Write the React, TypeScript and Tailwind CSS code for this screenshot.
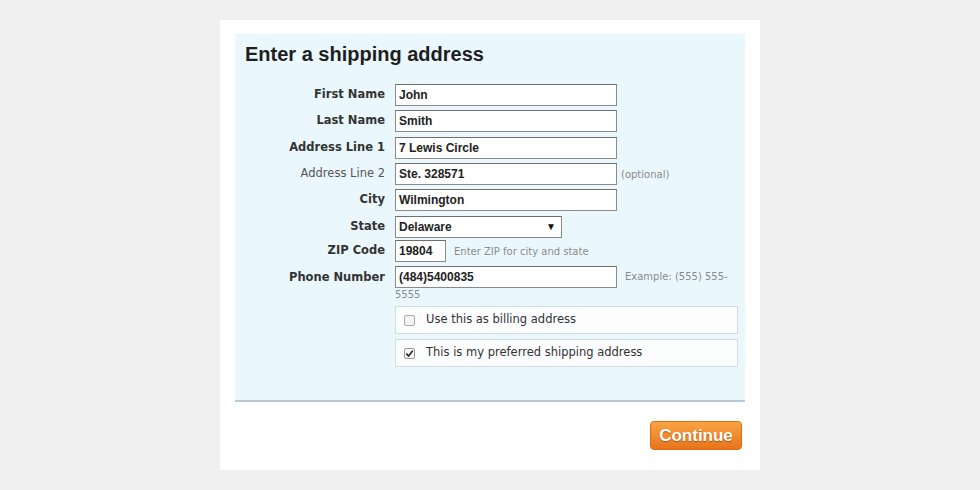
import React from "react";

const lbl = "w-[160px] text-right pr-[10px] text-[11.5px] font-bold text-[#333] shrink-0";
const inp = "h-[22px] border border-[#8a8a8a] border-t-[#6f6f6f] bg-white px-[3px] flex items-center text-[12px] font-bold text-[#222] [font-family:'Liberation_Sans',Arial,sans-serif]";

function Row({ label, children, normal }: { label: string; children: React.ReactNode; normal?: boolean }) {
  return (
    <div className="flex items-center h-[22px]">
      <div className={normal ? "w-[160px] text-right pr-[10px] text-[11.5px] text-[#555] shrink-0" : lbl}>{label}</div>
      {children}
    </div>
  );
}

export default function App() {
  return (
    <div className="w-[980px] h-[490px] bg-[#f0f0f0] pt-[20px] [font-family:'DejaVu_Sans',Verdana,sans-serif]">
      <div className="ml-[220px] w-[540px] h-[450px] bg-white pt-[14px] px-[15px]">
        <div className="bg-[#eaf8fd] h-[368px] border-b-2 border-[#b9c9d1] pt-[7px]">
          <h1 className="pl-[10px] text-[20px] font-bold text-[#1e1e1e] [font-family:'Liberation_Sans',Arial,sans-serif] leading-[26px]">
            Enter a shipping address
          </h1>
          <div className="mt-[17px] flex flex-col">
            <Row label="First Name"><div className={`${inp} w-[222px]`}>John</div></Row>
            <div className="h-[4px]" />
            <Row label="Last Name"><div className={`${inp} w-[222px]`}>Smith</div></Row>
            <div className="h-[5px]" />
            <Row label="Address Line 1"><div className={`${inp} w-[222px]`}>7 Lewis Circle</div></Row>
            <div className="h-[4px]" />
            <Row label="Address Line 2" normal>
              <div className={`${inp} w-[222px]`}>Ste. 328571</div>
              <span className="ml-[4px] text-[10px] text-[#8a8a8a]">(optional)</span>
            </Row>
            <div className="h-[4px]" />
            <Row label="City"><div className={`${inp} w-[222px]`}>Wilmington</div></Row>
            <div className="h-[5px]" />
            <div className="flex items-center h-[21px]">
              <div className={lbl}>State</div>
              <div className={`${inp} h-[21px] w-[167px] justify-between pr-[5px]`}>
                <span>Delaware</span>
                <span className="text-[10px] text-[#111]">▼</span>
              </div>
            </div>
            <div className="h-[3px]" />
            <Row label="ZIP Code">
              <div className={`${inp} w-[51px]`}>19804</div>
              <span className="ml-[8px] text-[10px] text-[#8a8a8a]">Enter ZIP for city and state</span>
            </Row>
            <div className="h-[4px]" />
            <div className="flex items-start">
              <div className={`${lbl} leading-[22px]`}>Phone Number</div>
              <div className="w-[343px] text-[10px] text-[#8a8a8a] leading-[14px]">
                <div className={`${inp} w-[222px] inline-flex align-top mr-[8px]`}>(484)5400835</div>
                <span className="inline-block pt-[4px]">Example: (555) 555-</span>
                <span>5555</span>
              </div>
            </div>
            <div className="ml-[160px] w-[343px] mt-[4px] flex flex-col gap-[5px]">
              <div className="h-[28px] border border-[#d2dde2] bg-[#fbfdfe] flex items-center pl-[8px] text-[11.5px] text-[#333]">
                <span className="w-[11px] h-[11px] border border-[#aaa] bg-[#f4f4f4] rounded-[2px] mr-[11px]" />
                Use this as billing address
              </div>
              <div className="h-[28px] border border-[#d2dde2] bg-[#fbfdfe] flex items-center pl-[8px] text-[11.5px] text-[#333]">
                <span className="w-[11px] h-[11px] border border-[#999] bg-[#f4f4f4] rounded-[2px] mr-[11px] flex items-center justify-center">
                  <svg width="9" height="9" viewBox="0 0 10 10"><path d="M1.5 5.2 L4 7.8 L8.6 1.8" stroke="#222" strokeWidth="1.8" fill="none" /></svg>
                </span>
                This is my preferred shipping address
              </div>
            </div>
          </div>
        </div>
        <div className="flex justify-end mt-[19px] pr-[3px]">
          <div className="w-[92px] h-[29px] rounded-[4px] border border-[#d8700f] bg-gradient-to-b from-[#f9a343] to-[#e7741a] flex items-center justify-center text-white font-bold text-[17px] [font-family:'Liberation_Sans',Arial,sans-serif] [text-shadow:0_1px_1px_rgba(120,50,0,0.6)]">
            Continue
          </div>
        </div>
      </div>
    </div>
  );
}
